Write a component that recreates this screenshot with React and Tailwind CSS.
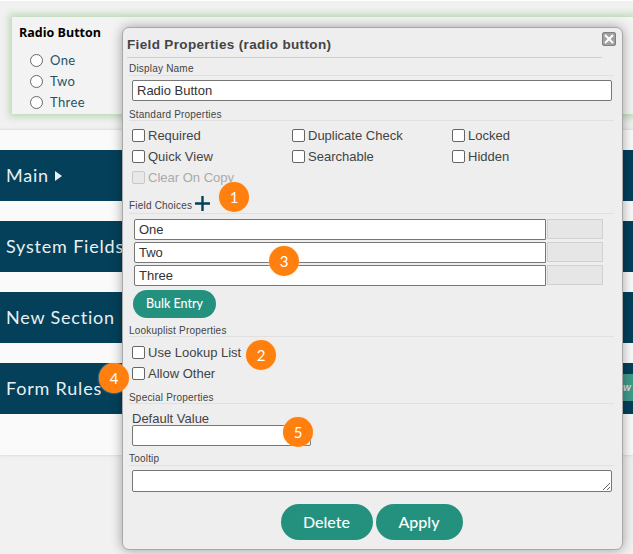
import { Fragment } from 'react';

const BARS = ['Main', 'System Fields', 'New Section', 'Form Rules'];

const CHECKS = [
  ['Required', 'Duplicate Check', 'Locked'],
  ['Quick View', 'Searchable', 'Hidden'],
];

function Badge({ n, className }) {
  return (
    <div className={`absolute w-[30px] h-[30px] rounded-full bg-[#ff7f0f] text-white text-[15px] flex items-center justify-center font-['Lato',sans-serif] shadow-[0_0_2px_#ffd9b0] ${className}`}>
      {n}
    </div>
  );
}

function SectionLabel({ children, className = '' }) {
  return (
    <div className={`text-[10px] leading-[12px] tracking-[0.2px] text-[#444] border-b border-[#e0e0e0] pb-[1px] mr-[7px] ${className}`}>
      {children}
    </div>
  );
}

function Check({ label, disabled }) {
  return (
    <label className={`flex items-center h-[21px] text-[13px] ${disabled ? 'text-[#aaa]' : 'text-[#444]'}`}>
      <span className={`w-[13px] h-[13px] rounded-[2px] border mr-[3px] ml-[1px] ${disabled ? 'border-[#c8c8c8] bg-[#e8e8e8]' : 'border-[#666] bg-white'}`} />
      {label}
    </label>
  );
}

function ChoiceRow({ value }) {
  return (
    <div className="flex h-[21px]">
      <div className="w-[412px] bg-white border border-[#767676] rounded-l-[2px] px-[4px] text-[13px] leading-[19px] text-[#333]">{value}</div>
      <div className="w-[56px] ml-[1px] h-[20px] bg-[#e6e6e6] border border-[#d0d0d0]" />
    </div>
  );
}

export default function App() {
  return (
    <div className="relative w-[633px] h-[554px] overflow-hidden bg-[#f1f1f1] font-['Liberation_Sans',Arial,sans-serif]">
      <div className="h-px bg-white" />

      {/* Form behind the dialog */}
      <div className="ml-[12px] mt-[16px] h-[97px] bg-[#f3f3f3] shadow-[0_0_7px_3px_#bcd9b6] pl-[7px] pt-[7px]">
        <div className="font-['Open_Sans',sans-serif] font-bold text-[12.5px] leading-[17px] text-black">Radio Button</div>
        <div className="mt-[9px] ml-[11px]">
          {['One', 'Two', 'Three'].map((o) => (
            <div key={o} className="flex items-center h-[21px] text-[13px] tracking-[0.4px] text-[#1d5568] font-['Lato',sans-serif]">
              <span className="w-[13px] h-[13px] rounded-full border border-[#666] bg-white mr-[7px]" />
              {o}
            </div>
          ))}
        </div>
      </div>

      <div className="mt-[16px] h-[325px] bg-[#fafafa] shadow-[0_0_3px_#ccc] pt-[20px]">
        {BARS.map((b, i) => (
          <Fragment key={b}>
            <div className={`h-[51px] bg-[#04405a] flex items-center pl-[6px] text-[18px] tracking-[0.8px] text-[#e8f0f2] font-['Lato',sans-serif] ${i > 0 ? 'mt-[20px]' : ''}`}>
              {b}
              {i === 0 && <span className="ml-[6px] w-0 h-0 border-y-[5px] border-y-transparent border-l-[7px] border-l-[#e8f0f2]" />}
            </div>
          </Fragment>
        ))}
      </div>

      {/* Teal button peeking out at the right of Form Rules */}
      <div className="absolute left-[623px] top-[374px] w-[10px] h-[27px] bg-[#3f9a8b] text-[10px] font-bold italic text-[#ddd] leading-[27px]">w</div>

      {/* Field properties dialog */}
      <div className="absolute left-[122px] top-[27px] w-[501px] h-[523px] bg-[#eeeeee] rounded-[7px] border border-[#a8a8a8] shadow-[0_0_12px_rgba(0,0,0,0.35)] pl-[6px] pr-[1px] pt-[8px] text-[#444]">
        <div className="mr-[19px] -ml-[2px] h-[22px] border-b border-[#cfcfcf] text-[13.5px] font-bold tracking-[0.35px] text-[#444] leading-[17px]">
          Field Properties (radio button)
        </div>
        <button className="absolute right-[6px] top-[4px] w-[14px] h-[14px] bg-[#a0a0a0] border border-[#808080] rounded-[2px] flex items-center justify-center">
          <svg width="12" height="12" viewBox="0 0 12 12"><path d="M2 2l8 8M10 2l-8 8" stroke="#fff" strokeWidth="2" /></svg>
        </button>

        <SectionLabel className="mt-[5px] h-[13px]">Display Name</SectionLabel>
        <div className="ml-[3px] mt-[4px] w-[480px] h-[21px] bg-white border border-[#767676] rounded-[2px] px-[4px] text-[13px] leading-[19px] text-[#333]">Radio Button</div>

        <SectionLabel className="mt-[8px] h-[12px]">Standard Properties</SectionLabel>
        <div className="mt-[4px] ml-[2px]">
          {CHECKS.map((row) => (
            <div key={row[0]} className="grid grid-cols-[160px_160px_1fr]">
              {row.map((c) => <Check key={c} label={c} />)}
            </div>
          ))}
          <Check label="Clear On Copy" disabled />
        </div>

        <SectionLabel className="mt-[5px] h-[21px] flex items-end">
          Field Choices
          <svg className="ml-[3px] mb-[1px]" width="15" height="15" viewBox="0 0 15 15"><path d="M7.5 0v15M0 7.5h15" stroke="#04405a" strokeWidth="2.4" /></svg>
        </SectionLabel>

        <div className="mt-[5px] ml-[5px] flex flex-col gap-[2px]">
          <ChoiceRow value="One" />
          <ChoiceRow value="Two" />
          <ChoiceRow value="Three" />
        </div>
        <button className="mt-[4px] ml-[4px] block w-[83px] h-[28px] rounded-full bg-[#23917e] text-white text-[12.5px] font-medium font-['Lato',sans-serif]">Bulk Entry</button>

        <SectionLabel className="mt-[7px] h-[12px]">Lookuplist Properties</SectionLabel>
        <div className="mt-[5px] ml-[2px]">
          <Check label="Use Lookup List" />
          <Check label="Allow Other" />
        </div>

        <SectionLabel className="mt-[8px] h-[12px]">Special Properties</SectionLabel>
        <div className="ml-[3px] mt-[8px] text-[13px] leading-[13px] text-[#444]">Default Value</div>
        <div className="ml-[3px] w-[179px] h-[21px] bg-white border border-[#767676] rounded-[2px]" />

        <SectionLabel className="mt-[7px] h-[13px]">Tooltip</SectionLabel>
        <textarea readOnly className="block ml-[3px] mt-[4px] w-[480px] h-[22px] bg-white border border-[#767676] rounded-[2px]" />

        <div className="mt-[12px] flex justify-center gap-[3px] pr-[7px]">
          <button className="w-[92px] h-[36px] rounded-full bg-[#23917e] text-white text-[16px] font-['Lato',sans-serif] font-medium">Delete</button>
          <button className="w-[87px] h-[36px] rounded-full bg-[#23917e] text-white text-[16px] font-['Lato',sans-serif] font-medium">Apply</button>
        </div>
      </div>

      <Badge n="1" className="left-[219px] top-[182px]" />
      <Badge n="2" className="left-[246px] top-[340px]" />
      <Badge n="3" className="left-[269px] top-[246px]" />
      <Badge n="4" className="left-[99px] top-[363px]" />
      <Badge n="5" className="left-[283px] top-[417px]" />
    </div>
  );
}
